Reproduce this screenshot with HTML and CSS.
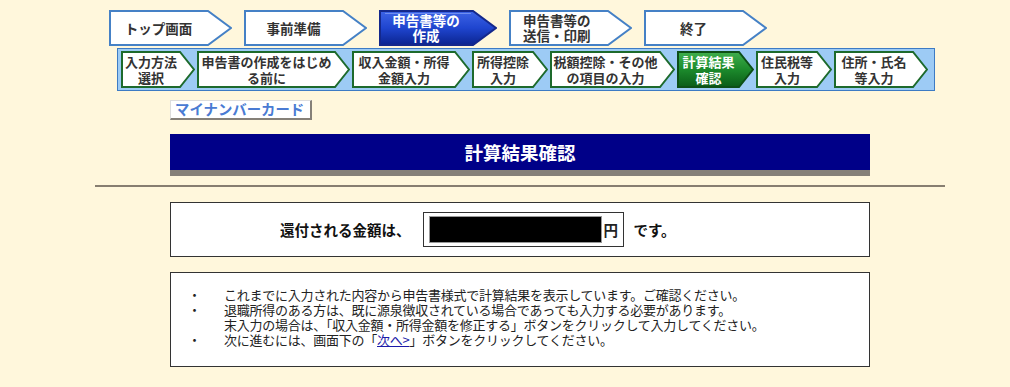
FILE: index.html
```html
<!DOCTYPE html>
<html lang="ja">
  <head>
    <meta charset="UTF-8" />
    <meta name="viewport" content="width=device-width, initial-scale=1.0" />
    <title>計算結果確認</title>
    <link rel="stylesheet" href="styles.css">
  </head>

  <body>
    <div class="page">
      <!-- 大きいステップ -->
      <nav class="steps">
        <div class="step">
          <svg width="123" height="36"><polygon points="1,1 99,1 122,18 99,35 1,35" /></svg>
          <span>トップ画面</span>
        </div>
        <div class="step">
          <svg width="123" height="36"><polygon points="1,1 99,1 122,18 99,35 1,35" /></svg>
          <span>事前準備</span>
        </div>
        <div class="step active">
          <svg width="118" height="36">
            <defs>
              <linearGradient id="blue-grad" x1="0" y1="0" x2="0" y2="1">
                <stop offset="0" stop-color="#3d64e6" />
                <stop offset="0.5" stop-color="#1f45cf" />
                <stop offset="1" stop-color="#0b248f" />
              </linearGradient>
            </defs>
            <polygon points="1,1 94,1 117,18 94,35 1,35" />
            <line x1="6" y1="3.5" x2="92" y2="3.5" />
          </svg>
          <span>申告書等の<br />作成</span>
        </div>
        <div class="step">
          <svg width="123" height="36"><polygon points="1,1 99,1 122,18 99,35 1,35" /></svg>
          <span class="left">申告書等の<br />送信・印刷</span>
        </div>
        <div class="step">
          <svg width="123" height="36"><polygon points="1,1 99,1 122,18 99,35 1,35" /></svg>
          <span>終了</span>
        </div>
      </nav>

      <!-- 小さいステップ -->
      <nav class="substeps">
        <div class="sub">
          <svg width="74" height="37"><polygon points="1,1 59,1 73,18.5 59,36 1,36" /></svg>
          <span>入力方法<br />選択</span>
        </div>
        <div class="sub">
          <svg width="153" height="37"><polygon points="1,1 138,1 152,18.5 138,36 1,36" /></svg>
          <span>申告書の作成をはじめ<br />る前に</span>
        </div>
        <div class="sub">
          <svg width="118" height="37"><polygon points="1,1 103,1 117,18.5 103,36 1,36" /></svg>
          <span>収入金額・所得<br />金額入力</span>
        </div>
        <div class="sub">
          <svg width="76" height="37"><polygon points="1,1 61,1 75,18.5 61,36 1,36" /></svg>
          <span>所得控除<br />入力</span>
        </div>
        <div class="sub">
          <svg width="125" height="37"><polygon points="1,1 110,1 124,18.5 110,36 1,36" /></svg>
          <span>税額控除・その他<br />の項目の入力</span>
        </div>
        <div class="sub active">
          <svg width="77" height="37">
            <defs>
              <linearGradient id="green-grad" x1="0" y1="0" x2="0" y2="1">
                <stop offset="0" stop-color="#3fae4c" />
                <stop offset="0.5" stop-color="#1c8a2c" />
                <stop offset="1" stop-color="#0b5c18" />
              </linearGradient>
            </defs>
            <polygon points="1,1 62,1 76,18.5 62,36 1,36" />
          </svg>
          <span>計算結果<br />確認</span>
        </div>
        <div class="sub">
          <svg width="76" height="37"><polygon points="1,1 61,1 75,18.5 61,36 1,36" /></svg>
          <span>住民税等<br />入力</span>
        </div>
        <div class="sub">
          <svg width="94" height="37"><polygon points="1,1 79,1 93,18.5 79,36 1,36" /></svg>
          <span>住所・氏名<br />等入力</span>
        </div>
      </nav>

      <div class="content">
        <button class="mynumber">マイナンバーカード</button>

        <h1 class="page-title">計算結果確認</h1>
      </div>

      <hr class="divider" />

      <div class="content">
        <div class="refund-box">
          <span class="refund-label">還付される金額は、</span>
          <div class="amount">
            <div class="amount-value"></div>
            <span>円</span>
          </div>
          <span class="refund-label">です。</span>
        </div>

        <div class="notes">
          <div class="note"><span class="dot">・</span><span>これまでに入力された内容から申告書様式で計算結果を表示しています。ご確認ください。</span></div>
          <div class="note"><span class="dot">・</span><span>退職所得のある方は、既に源泉徴収されている場合であっても入力する必要があります。<br />末入力の場合は、「収入金額・所得金額を修正する」ボタンをクリックして入力してください。</span></div>
          <div class="note"><span class="dot">・</span><span>次に進むには、画面下の「<a href="#">次へ&gt;</a>」ボタンをクリックしてください。</span></div>
        </div>
      </div>
    </div>
  </body>
</html>
```

FILE: styles.css
```css
html,
body {
  margin: 0;
  padding: 0;
  height: 100%;
}

body {
  background-color: #fff7dc;
  color: #222;
  font-family: "Noto Sans CJK JP", "Liberation Sans", sans-serif;
}

button {
  margin: 0;
  padding: 0;
  border: 0;
  background: none;
  font-family: inherit;
  -webkit-appearance: none;
  appearance: none;
}

.page {
  padding-top: 10px;
}

/* 大きいステップ */
.steps {
  display: flex;
  gap: 12px;
  margin-left: 109px;
}

.step {
  display: grid;
}

.step > * {
  grid-area: 1 / 1;
}

.step svg {
  display: block;
}

.step polygon {
  fill: #fff;
  stroke: #4581c6;
  stroke-width: 2;
}

.step span {
  align-self: center;
  padding-right: 24px;
  text-align: center;
  font-size: 13.5px;
  font-weight: bold;
  line-height: 15px;
  color: #333;
}

.step span.left {
  text-align: left;
  padding-left: 14px;
}

.step.active polygon {
  fill: url(#blue-grad);
  stroke: #14288c;
}

.step.active line {
  stroke: #6f8ef0;
  stroke-width: 1;
}

.step.active span {
  color: #fff;
}

/* 小さいステップ */
.substeps {
  display: flex;
  gap: 2px;
  box-sizing: border-box;
  width: 818px;
  margin: 2px 0 0 117px;
  padding: 2px 3px;
  background-color: #9dcbf5;
  border: 1px solid #3d7bc4;
}

.sub {
  display: grid;
}

.sub > * {
  grid-area: 1 / 1;
}

.sub svg {
  display: block;
}

.sub polygon {
  fill: #fff;
  stroke: #1d6a2c;
  stroke-width: 2;
}

.sub span {
  align-self: center;
  padding-right: 14px;
  text-align: center;
  font-size: 13px;
  font-weight: bold;
  line-height: 16px;
  color: #333;
}

.sub.active polygon {
  fill: url(#green-grad);
  stroke: #0d4f17;
}

.sub.active span {
  color: #fff;
}

/* 本文 */
.content {
  width: 700px;
  margin-left: 170px;
}

.mynumber {
  display: block;
  box-sizing: border-box;
  width: 142px;
  height: 20px;
  margin-top: 9px;
  padding: 0 0 1px 4px;
  text-align: left;
  background-color: #fff;
  border-top: 1px solid #ddd;
  border-left: 1px solid #ddd;
  border-right: 2px solid #858078;
  border-bottom: 2px solid #858078;
  font-size: 14.4px;
  font-weight: bold;
  line-height: 16px;
  color: #4a7bd3;
}

.page-title {
  box-sizing: border-box;
  height: 42px;
  margin: 14px 0 0;
  background-color: #000088;
  border-bottom: 6px solid #858078;
  text-align: center;
  font-size: 18.5px;
  font-weight: bold;
  line-height: 36px;
  color: #fff;
}

.divider {
  width: 850px;
  height: 0;
  margin: 9px 0 15px 95px;
  border: 0;
  border-top: 2px solid #877e70;
}

.refund-box {
  display: flex;
  align-items: center;
  box-sizing: border-box;
  height: 55px;
  padding-left: 109px;
  background-color: #fff;
  border: 1px solid #333;
}

.refund-label {
  font-size: 14.5px;
  font-weight: bold;
  color: #111;
}

.amount {
  display: flex;
  align-items: center;
  box-sizing: border-box;
  width: 201px;
  height: 35px;
  margin: 0 10px 0 12px;
  padding-left: 5px;
  border: 1px solid #333;
  font-size: 14.5px;
  font-weight: bold;
}

.amount-value {
  box-sizing: border-box;
  width: 173px;
  height: 27px;
  margin-right: 2px;
  background-color: #000;
  border: 1px solid #999;
}

.notes {
  box-sizing: border-box;
  height: 95px;
  margin-top: 15px;
  padding: 14px 0 0 17px;
  background-color: #fff;
  border: 1px solid #333;
}

.note {
  display: flex;
  font-size: 13px;
  letter-spacing: -0.25px;
  line-height: 15px;
  color: #222;
}

.note .dot {
  flex-shrink: 0;
  width: 36px;
}

.note a {
  color: #1a1aa8;
}
```
